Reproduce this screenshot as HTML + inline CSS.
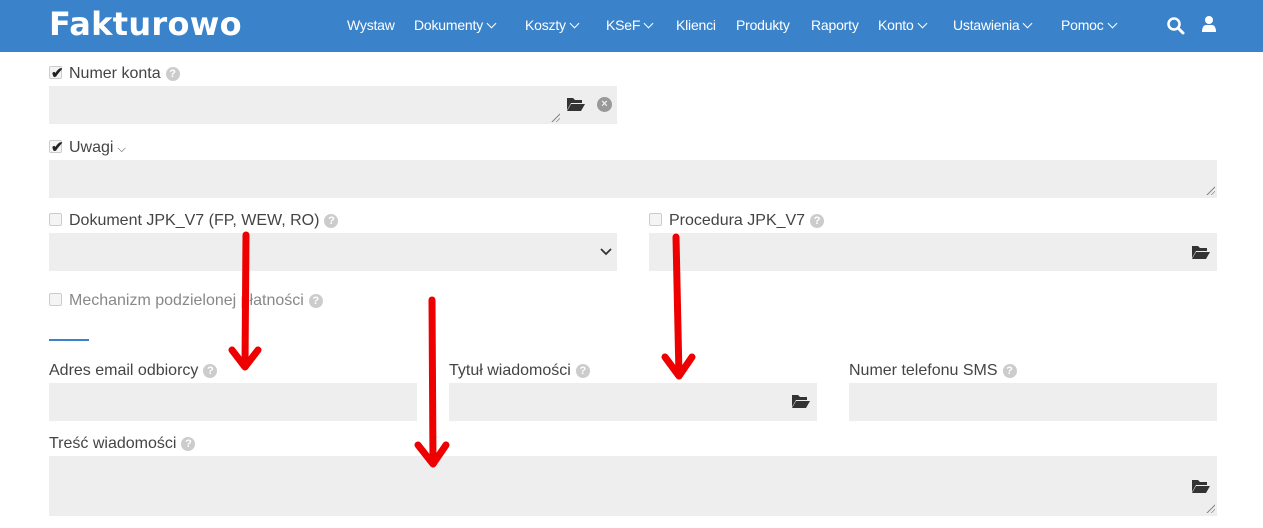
<!DOCTYPE html>
<html><head><meta charset="utf-8"><style>
*{margin:0;padding:0;box-sizing:border-box}
body{width:1263px;height:528px;overflow:hidden;background:#fff;font-family:"Liberation Sans",sans-serif;position:relative;color:#444}
.nav{position:absolute;left:0;top:0;width:1263px;height:52px;background:#3a82c9}
.logo{position:absolute;left:49px;top:5px;font-size:32px;font-weight:bold;color:#fff;letter-spacing:0.3px;font-family:"DejaVu Sans","Liberation Sans",sans-serif}
.nav .it{position:absolute;top:17px;color:#fff;font-size:14px;letter-spacing:-0.2px}
.chev{display:inline-block;width:7px;height:7px;border-right:1.3px solid #fff;border-bottom:1.3px solid #fff;transform:rotate(45deg);margin-left:5px;position:relative;top:-3px}
.a{position:absolute}
.lbl{position:absolute;font-size:16px;color:#444;white-space:nowrap}
.lbl.g{color:#888}
.q{display:inline-block;width:14px;height:14px;border-radius:50%;background:#ccc;color:#fff;font-size:11px;font-weight:bold;text-align:center;line-height:14px;vertical-align:1px;margin-left:5px}
.box{position:absolute;background:#eee}
.cb{display:inline-block;width:13px;height:13px;border:1px solid #ccc;background:#f4f4f4;border-radius:2px;vertical-align:-1px;margin-right:7px;position:relative}
.ck{position:absolute;left:1px;top:-3px;font-size:15px;color:#222;font-weight:bold}
.fold{position:absolute;width:18px;height:14px}
.grip{position:absolute;width:10px;height:10px;background:repeating-linear-gradient(135deg,transparent 0 2px,#888 2px 3px);clip-path:polygon(100% 0,100% 100%,0 100%)}
</style></head><body>
<div class="nav">
<div class="logo">Fakturowo</div>
<span class="it" style="left:347px">Wystaw</span>
<span class="it" style="left:414px">Dokumenty<i class="chev"></i></span>
<span class="it" style="left:525px">Koszty<i class="chev"></i></span>
<span class="it" style="left:606px">KSeF<i class="chev"></i></span>
<span class="it" style="left:676px">Klienci</span>
<span class="it" style="left:736px">Produkty</span>
<span class="it" style="left:811px">Raporty</span>
<span class="it" style="left:878px">Konto<i class="chev"></i></span>
<span class="it" style="left:953px">Ustawienia<i class="chev"></i></span>
<span class="it" style="left:1061px">Pomoc<i class="chev"></i></span>
<svg class="a" style="left:1166px;top:16px" width="20" height="20" viewBox="0 0 20 20"><circle cx="8" cy="8" r="5.5" fill="none" stroke="#fff" stroke-width="2.6"/><path d="M12 12l5 5" stroke="#fff" stroke-width="3" stroke-linecap="round"/></svg>
<svg class="a" style="left:1201px;top:15px" width="16" height="18" viewBox="0 0 16 18"><circle cx="8" cy="5" r="4" fill="#fff"/><path d="M1 17c0-5 2-7 4-7h6c2 0 4 2 4 7z" fill="#fff"/></svg>
</div>

<div class="lbl" style="left:49px;top:65px"><span class="cb"><span class="ck">✔</span></span>Numer konta<span class="q">?</span></div>
<div class="box" style="left:49px;top:86px;width:568px;height:38px"></div>
<div class="grip" style="left:550px;top:112px"></div>
<svg class="fold" style="left:567px;top:97px" viewBox="0 0 18 14"><path d="M0 1h6l2 2h7v3H4L0 13z" fill="#333"/><path d="M4 7h14l-4 7H0z" fill="#333"/></svg>
<div class="a" style="left:597px;top:97px;width:15px;height:15px;border-radius:50%;background:#999;color:#eee;font-size:11px;font-weight:bold;text-align:center;line-height:15px">×</div>

<div class="lbl" style="left:49px;top:139px"><span class="cb"><span class="ck">✔</span></span>Uwagi<span style="font-size:11px;margin-left:4px">⌵</span></div>
<div class="box" style="left:49px;top:160px;width:1168px;height:38px"></div>
<div class="grip" style="left:1205px;top:185px"></div>

<div class="lbl" style="left:49px;top:212px"><span class="cb"></span>Dokument JPK_V7 (FP, WEW, RO)<span class="q">?</span></div>
<div class="box" style="left:49px;top:233px;width:568px;height:38px"></div>
<svg class="a" style="left:600px;top:248px" width="12" height="8" viewBox="0 0 12 8"><path d="M1 1l5 5 5-5" fill="none" stroke="#333" stroke-width="1.8"/></svg>
<div class="lbl" style="left:649px;top:212px"><span class="cb"></span>Procedura JPK_V7<span class="q">?</span></div>
<div class="box" style="left:649px;top:233px;width:568px;height:38px"></div>
<svg class="fold" style="left:1192px;top:245px" viewBox="0 0 18 14"><path d="M0 1h6l2 2h7v3H4L0 13z" fill="#333"/><path d="M4 7h14l-4 7H0z" fill="#333"/></svg>

<div class="lbl g" style="left:49px;top:292px"><span class="cb"></span>Mechanizm podzielonej płatności<span class="q">?</span></div>
<div class="a" style="left:49px;top:339px;width:40px;height:2px;background:#3a82c9"></div>

<div class="lbl" style="left:49px;top:362px">Adres email odbiorcy<span class="q">?</span></div>
<div class="box" style="left:49px;top:383px;width:368px;height:38px"></div>
<div class="lbl" style="left:449px;top:362px">Tytuł wiadomości<span class="q">?</span></div>
<div class="box" style="left:449px;top:383px;width:368px;height:38px"></div>
<svg class="fold" style="left:792px;top:394px" viewBox="0 0 18 14"><path d="M0 1h6l2 2h7v3H4L0 13z" fill="#333"/><path d="M4 7h14l-4 7H0z" fill="#333"/></svg>
<div class="lbl" style="left:849px;top:362px">Numer telefonu SMS<span class="q">?</span></div>
<div class="box" style="left:849px;top:383px;width:368px;height:38px"></div>

<div class="lbl" style="left:49px;top:435px">Treść wiadomości<span class="q">?</span></div>
<div class="box" style="left:49px;top:456px;width:1168px;height:60px"></div>
<svg class="fold" style="left:1192px;top:479px" viewBox="0 0 18 14"><path d="M0 1h6l2 2h7v3H4L0 13z" fill="#333"/><path d="M4 7h14l-4 7H0z" fill="#333"/></svg>
<div class="grip" style="left:1205px;top:503px"></div>

<svg class="a" style="left:0;top:0" width="1263" height="528" viewBox="0 0 1263 528">
<g stroke="#e00" stroke-width="7" stroke-linecap="round" stroke-linejoin="round" fill="none">
<path d="M246 235L245 366M232 350L245 367L258 350"/>
<path d="M676 237L679 376M665 357L679 376L692 357"/>
<path d="M432 300L433 463M418 445L433 464L446 445"/>
</g></svg>
</body></html>
